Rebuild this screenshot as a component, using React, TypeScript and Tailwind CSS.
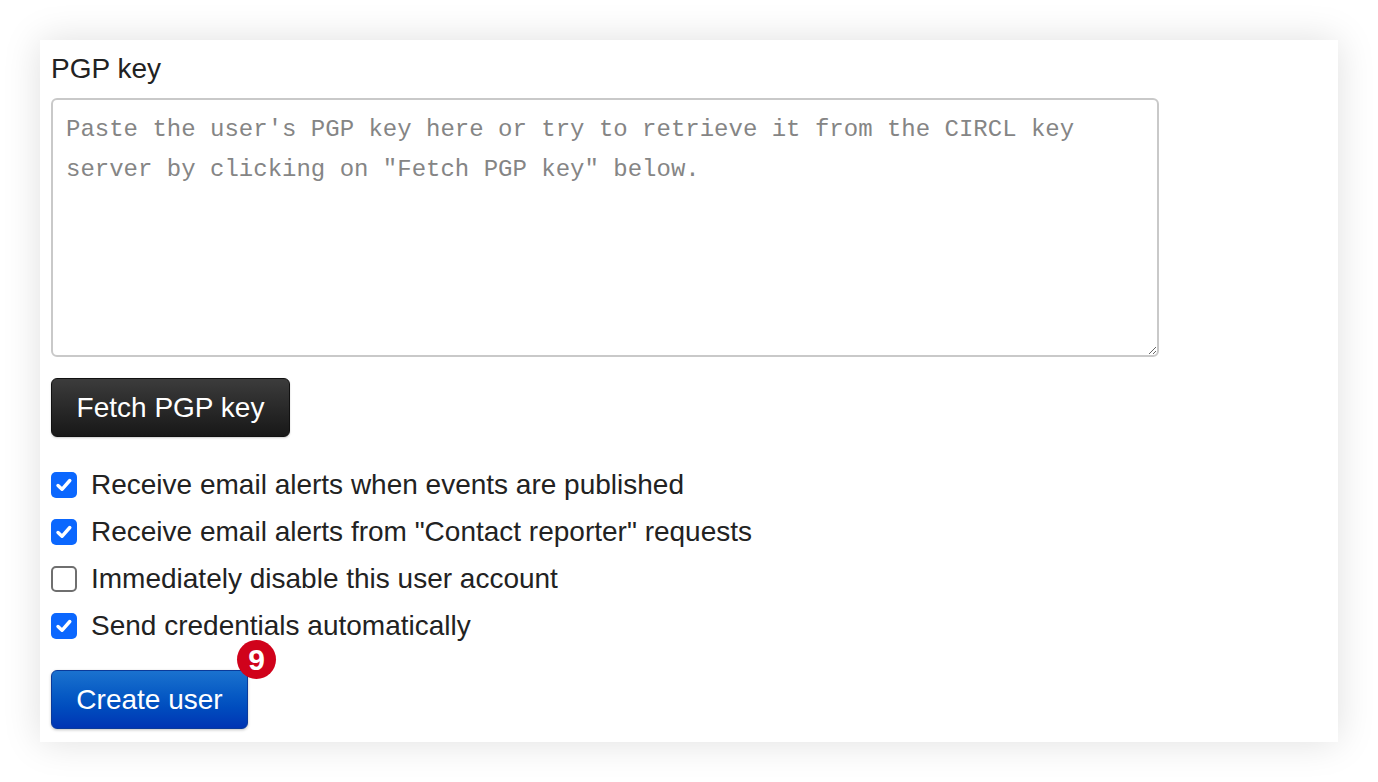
import React from "react";

function Check({ checked }: { checked: boolean }) {
  return checked ? (
    <span className="flex h-[26px] w-[26px] items-center justify-center rounded-[5px] bg-[#0b67fe]">
      <svg width="20" height="20" viewBox="0 0 20 20" fill="none">
        <path d="M4 10.5 L8 14.3 L15.8 5.5" stroke="white" strokeWidth="3.4" strokeLinecap="round" strokeLinejoin="round" />
      </svg>
    </span>
  ) : (
    <span className="block h-[26px] w-[26px] rounded-[5px] border-2 border-[#6f6f6f] bg-white" />
  );
}

const rows: [boolean, string][] = [
  [true, "Receive email alerts when events are published"],
  [true, 'Receive email alerts from "Contact reporter" requests'],
  [false, "Immediately disable this user account"],
  [true, "Send credentials automatically"],
];

export default function App() {
  return (
    <div className="min-h-[782px] w-[1378px] bg-white p-[40px] font-['Liberation_Sans',Arial,sans-serif] text-[#222]">
      <div className="flex h-[702px] flex-col bg-white pl-[11px] pt-[14px] shadow-[0_0_36px_rgba(0,0,0,0.13)]">
        <label className="text-[28px] leading-[30px]">PGP key</label>
        <textarea
          className="mt-[14px] h-[259px] w-[1108px] rounded-[6px] border-2 border-[#c9c9c9] px-[13px] pt-[10px] font-['Liberation_Mono','DejaVu_Sans_Mono',monospace] text-[24px] leading-[40px] text-[#333] outline-none placeholder:text-[#858585]"
          placeholder={`Paste the user's PGP key here or try to retrieve it from the CIRCL key server by clicking on "Fetch PGP key" below.`}
        />
        <div className="mt-[21px]">
          <button className="h-[59px] w-[239px] rounded-[6px] border border-[#111] bg-gradient-to-b from-[#3c3c3c] to-[#181818] text-[28px] text-white shadow-[0_1px_2px_rgba(0,0,0,0.2)]">
            Fetch PGP key
          </button>
        </div>
        <div className="mt-[24px] flex flex-col">
          {rows.map(([c, t]) => (
            <div key={t} className="flex h-[47px] items-center gap-[14px]">
              <Check checked={c} />
              <span className="text-[28px] leading-[30px]">{t}</span>
            </div>
          ))}
        </div>
        <div className="relative mt-[21px] w-[197px]">
          <button className="h-[59px] w-[197px] rounded-[6px] border border-[#0a3a9a] bg-gradient-to-b from-[#1a72cf] to-[#0034b4] text-[28px] text-white shadow-[0_1px_3px_rgba(0,0,0,0.25)]">
            Create user
          </button>
          <span className="absolute left-[186px] top-[-30px] flex h-[39px] w-[39px] items-center justify-center rounded-full bg-[#d0021b] text-[30px] font-bold leading-none text-white">
            9
          </span>
        </div>
      </div>
    </div>
  );
}
